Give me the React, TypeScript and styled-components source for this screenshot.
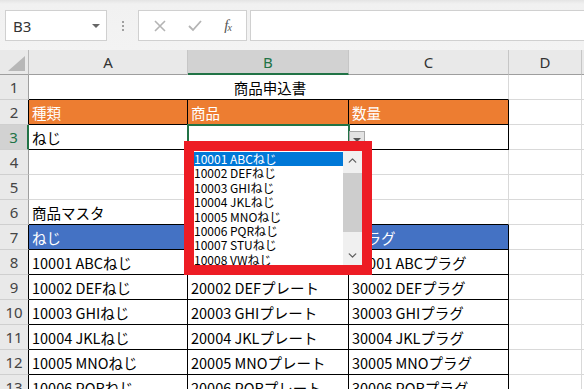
import React from 'react';
import styled, { createGlobalStyle } from 'styled-components';
import { ChevronUp, ChevronDown } from 'lucide-react';

const GlobalStyle = createGlobalStyle`
  html, body {
    margin: 0;
    padding: 0;
    background: #ffffff;
    overflow: hidden;
  }
  * {
    box-sizing: border-box;
  }
`;

const GRID = '#d9d9d9';
const BLACK = '#000000';
const GREEN = '#217346';
const JP = `"Noto Sans CJK JP", "Noto Sans", sans-serif`;
const UI = `"Noto Sans", "Open Sans", "Liberation Sans", sans-serif`;

const StRoot = styled.div`
  position: relative;
  width: 584px;
  height: 389px;
  overflow: hidden;
  font-family: ${JP};
`;

const StToolbar = styled.div`
  height: 50px;
  display: flex;
  align-items: flex-start;
  padding: 10px 0 0 5px;
  background: linear-gradient(#e4e4e4 0, #f1f1f1 4px, #f3f3f3 100%);
`;

const StNameBox = styled.div`
  width: 102px;
  height: 31px;
  background: #fff;
  border: 1px solid #d0d0d0;
  display: flex;
  align-items: center;
  justify-content: space-between;
  padding: 0 6px 0 7px;
  font-family: ${UI};
  font-size: 15px;
  color: #333;

  .caret {
    width: 0;
    height: 0;
    border-left: 4px solid transparent;
    border-right: 4px solid transparent;
    border-top: 4px solid #666;
  }
`;

const StDots = styled.div`
  width: 31px;
  height: 31px;
  display: flex;
  flex-direction: column;
  align-items: center;
  justify-content: center;
  gap: 2px;

  span {
    width: 2px;
    height: 2px;
    background: #a0a0a0;
  }
`;

const StFxButtons = styled.div`
  width: 109px;
  height: 31px;
  background: #fff;
  border: 1px solid #d0d0d0;
  display: flex;
  align-items: center;
  justify-content: space-around;
  padding: 0 4px;

  .fx {
    font-family: "Liberation Serif", serif;
    font-style: italic;
    font-size: 15px;
    color: #555;
    letter-spacing: -1px;
  }
  .fx sub {
    font-size: 10px;
    vertical-align: -1px;
  }
`;

const StFormula = styled.div`
  flex: 1;
  height: 31px;
  margin-left: 3px;
  background: #fff;
  border: 1px solid #d0d0d0;
  border-right: none;
`;

const StSheet = styled.div`
  display: grid;
  grid-template-columns: 29px 159px 161px 160px 73px 1fr;
  grid-auto-rows: 25px;
`;

const StCorner = styled.div`
  background: #e9e9e9;
  border-right: 1px solid #b8b8b8;
  border-bottom: 1px solid #9e9e9e;
  display: flex;
  align-items: flex-end;
  justify-content: flex-end;
  padding: 0 3px 3px 0;

  .tri {
    width: 0;
    height: 0;
    border-left: 17px solid transparent;
    border-bottom: 15px solid #b7b7b7;
  }
`;

const StColHead = styled.div<{ $active?: boolean }>`
  background: ${(p) => (p.$active ? '#d2d2d2' : '#e9e9e9')};
  border-right: 1px solid #c6c6c6;
  border-bottom: ${(p) => (p.$active ? `2px solid ${GREEN}` : '1px solid #9e9e9e')};
  display: flex;
  align-items: center;
  justify-content: center;
  font-family: ${UI};
  font-size: 15px;
  color: ${(p) => (p.$active ? GREEN : '#333')};
`;

const StRowHead = styled.div<{ $active?: boolean; $edge?: boolean }>`
  background: ${(p) => (p.$active ? '#d2d2d2' : '#e9e9e9')};
  border-bottom: 1px solid #cfcfcf;
  border-right: ${(p) =>
    p.$active ? `2px solid ${GREEN}` : p.$edge ? `1px solid ${BLACK}` : '1px solid #9e9e9e'};
  display: flex;
  align-items: center;
  justify-content: center;
  font-family: ${UI};
  font-size: 15px;
  color: ${(p) => (p.$active ? GREEN : '#444')};
`;

const StCell = styled.div<{
  $span?: number;
  $fill?: string;
  $boxed?: boolean;
  $under?: boolean;
  $center?: boolean;
  $selected?: boolean;
}>`
  position: relative;
  grid-column: span ${(p) => p.$span || 1};
  background: ${(p) => p.$fill || '#fff'};
  color: ${(p) => (p.$fill ? '#fff' : '#000')};
  border-right: 1px solid ${(p) => (p.$boxed ? BLACK : GRID)};
  border-bottom: 1px solid ${(p) => (p.$boxed || p.$under ? BLACK : GRID)};
  display: flex;
  align-items: center;
  justify-content: ${(p) => (p.$center ? 'center' : 'flex-start')};
  padding: 1px 0 0 3px;
  font-size: 14.5px;
  white-space: nowrap;
  overflow: visible;
  ${(p) =>
    p.$selected &&
    `
    outline: 2px solid ${GREEN};
    outline-offset: -1px;
    z-index: 1;
  `}
`;

const StValidationBtn = styled.div`
  position: absolute;
  left: 161px;
  top: 6px;
  width: 16px;
  height: 17px;
  background: #e3e3e3;
  border: 1px solid #a9a9a9;
  display: flex;
  align-items: center;
  justify-content: center;

  &::after {
    content: '';
    border-left: 4px solid transparent;
    border-right: 4px solid transparent;
    border-top: 4px solid #555;
  }
`;

const StRedFrame = styled.div`
  position: absolute;
  left: 184px;
  top: 141px;
  width: 188px;
  height: 134px;
  border: 10px solid #ed1c24;
  background: #fff;
  display: flex;
  z-index: 5;
`;

const StList = styled.div`
  flex: 1;
  overflow: hidden;
  padding-top: 1px;
`;

const StItem = styled.div<{ $selected?: boolean }>`
  height: 14.4px;
  line-height: 14.4px;
  font-size: 12px;
  white-space: nowrap;
  background: ${(p) => (p.$selected ? '#0078d7' : 'transparent')};
  color: ${(p) => (p.$selected ? '#fff' : '#000')};
`;

const StScroll = styled.div`
  width: 19px;
  background: #f0f0f0;
  display: flex;
  flex-direction: column;
  align-items: stretch;

  .arrow {
    height: 19px;
    display: flex;
    align-items: center;
    justify-content: center;
    color: #606060;
  }
  .thumb {
    margin-top: 3px;
    height: 59px;
    background: #cdcdcd;
  }
  .track {
    flex: 1;
  }
`;

type Row = {
  n: number;
  cells: {
    text?: string;
    span?: number;
    fill?: string;
    boxed?: boolean;
    under?: boolean;
    center?: boolean;
    selected?: boolean;
  }[];
};

const ORANGE = '#ed7d31';
const BLUE = '#4472c4';
const codes = ['ABC', 'DEF', 'GHI', 'JKL', 'MNO', 'PQR'];

const rows: Row[] = [
  { n: 1, cells: [{ text: '商品申込書', span: 3, center: true, under: true }] },
  {
    n: 2,
    cells: ['種類', '商品', '数量'].map((t) => ({ text: t, fill: ORANGE, boxed: true })),
  },
  { n: 3, cells: [{ text: 'ねじ', boxed: true }, { boxed: true, selected: true }, { boxed: true }] },
  { n: 4, cells: [{}, {}, {}] },
  { n: 5, cells: [{}, {}, {}] },
  { n: 6, cells: [{ text: '商品マスタ', under: true }, { under: true }, { under: true }] },
  {
    n: 7,
    cells: ['ねじ', 'プレート', 'プラグ'].map((t) => ({ text: t, fill: BLUE, boxed: true })),
  },
  ...codes.map((c, i) => ({
    n: 8 + i,
    cells: [
      { text: `1000${i + 1} ${c}ねじ`, boxed: true },
      { text: `2000${i + 1} ${c}プレート`, boxed: true },
      { text: `3000${i + 1} ${c}プラグ`, boxed: true },
    ],
  })),
];

const listItems = ['ABC', 'DEF', 'GHI', 'JKL', 'MNO', 'PQR', 'STU', 'VW'].map(
  (c, i) => `1000${i + 1} ${c}ねじ`,
);

export default function App() {
  return (
    <StRoot>
      <GlobalStyle />
      <StToolbar>
        <StNameBox>
          <span>B3</span>
          <span className="caret" />
        </StNameBox>
        <StDots>
          <span />
          <span />
          <span />
        </StDots>
        <StFxButtons>
          <svg width="12" height="12" viewBox="0 0 12 12">
            <path d="M1 1 L11 11 M11 1 L1 11" stroke="#b4b4b4" strokeWidth="1.6" />
          </svg>
          <svg width="14" height="12" viewBox="0 0 14 12">
            <path d="M1 6 L5 10 L13 1" stroke="#b4b4b4" strokeWidth="1.8" fill="none" />
          </svg>
          <span className="fx">
            f<sub>x</sub>
          </span>
        </StFxButtons>
        <StFormula />
      </StToolbar>

      <StSheet>
        <StCorner>
          <span className="tri" />
        </StCorner>
        <StColHead>A</StColHead>
        <StColHead $active>B</StColHead>
        <StColHead>C</StColHead>
        <StColHead>D</StColHead>
        <StColHead />

        {rows.map((r) => {
          const edge = r.cells.some((c) => c.boxed);
          return (
            <React.Fragment key={r.n}>
              <StRowHead $active={r.n === 3} $edge={edge}>
                {r.n}
              </StRowHead>
              {r.cells.map((c, i) => (
                <StCell
                  key={i}
                  $span={c.span}
                  $fill={c.fill}
                  $boxed={c.boxed}
                  $under={c.under}
                  $center={c.center}
                  $selected={c.selected}
                >
                  {c.text}
                  {c.selected && <StValidationBtn />}
                </StCell>
              ))}
              <StCell />
              <StCell />
            </React.Fragment>
          );
        })}
      </StSheet>

      <StRedFrame>
        <StList>
          {listItems.map((t, i) => (
            <StItem key={t} $selected={i === 0}>
              {t}
            </StItem>
          ))}
        </StList>
        <StScroll>
          <div className="arrow">
            <ChevronUp size={13} strokeWidth={2.4} />
          </div>
          <div className="thumb" />
          <div className="track" />
          <div className="arrow">
            <ChevronDown size={13} strokeWidth={2.4} />
          </div>
        </StScroll>
      </StRedFrame>
    </StRoot>
  );
}
